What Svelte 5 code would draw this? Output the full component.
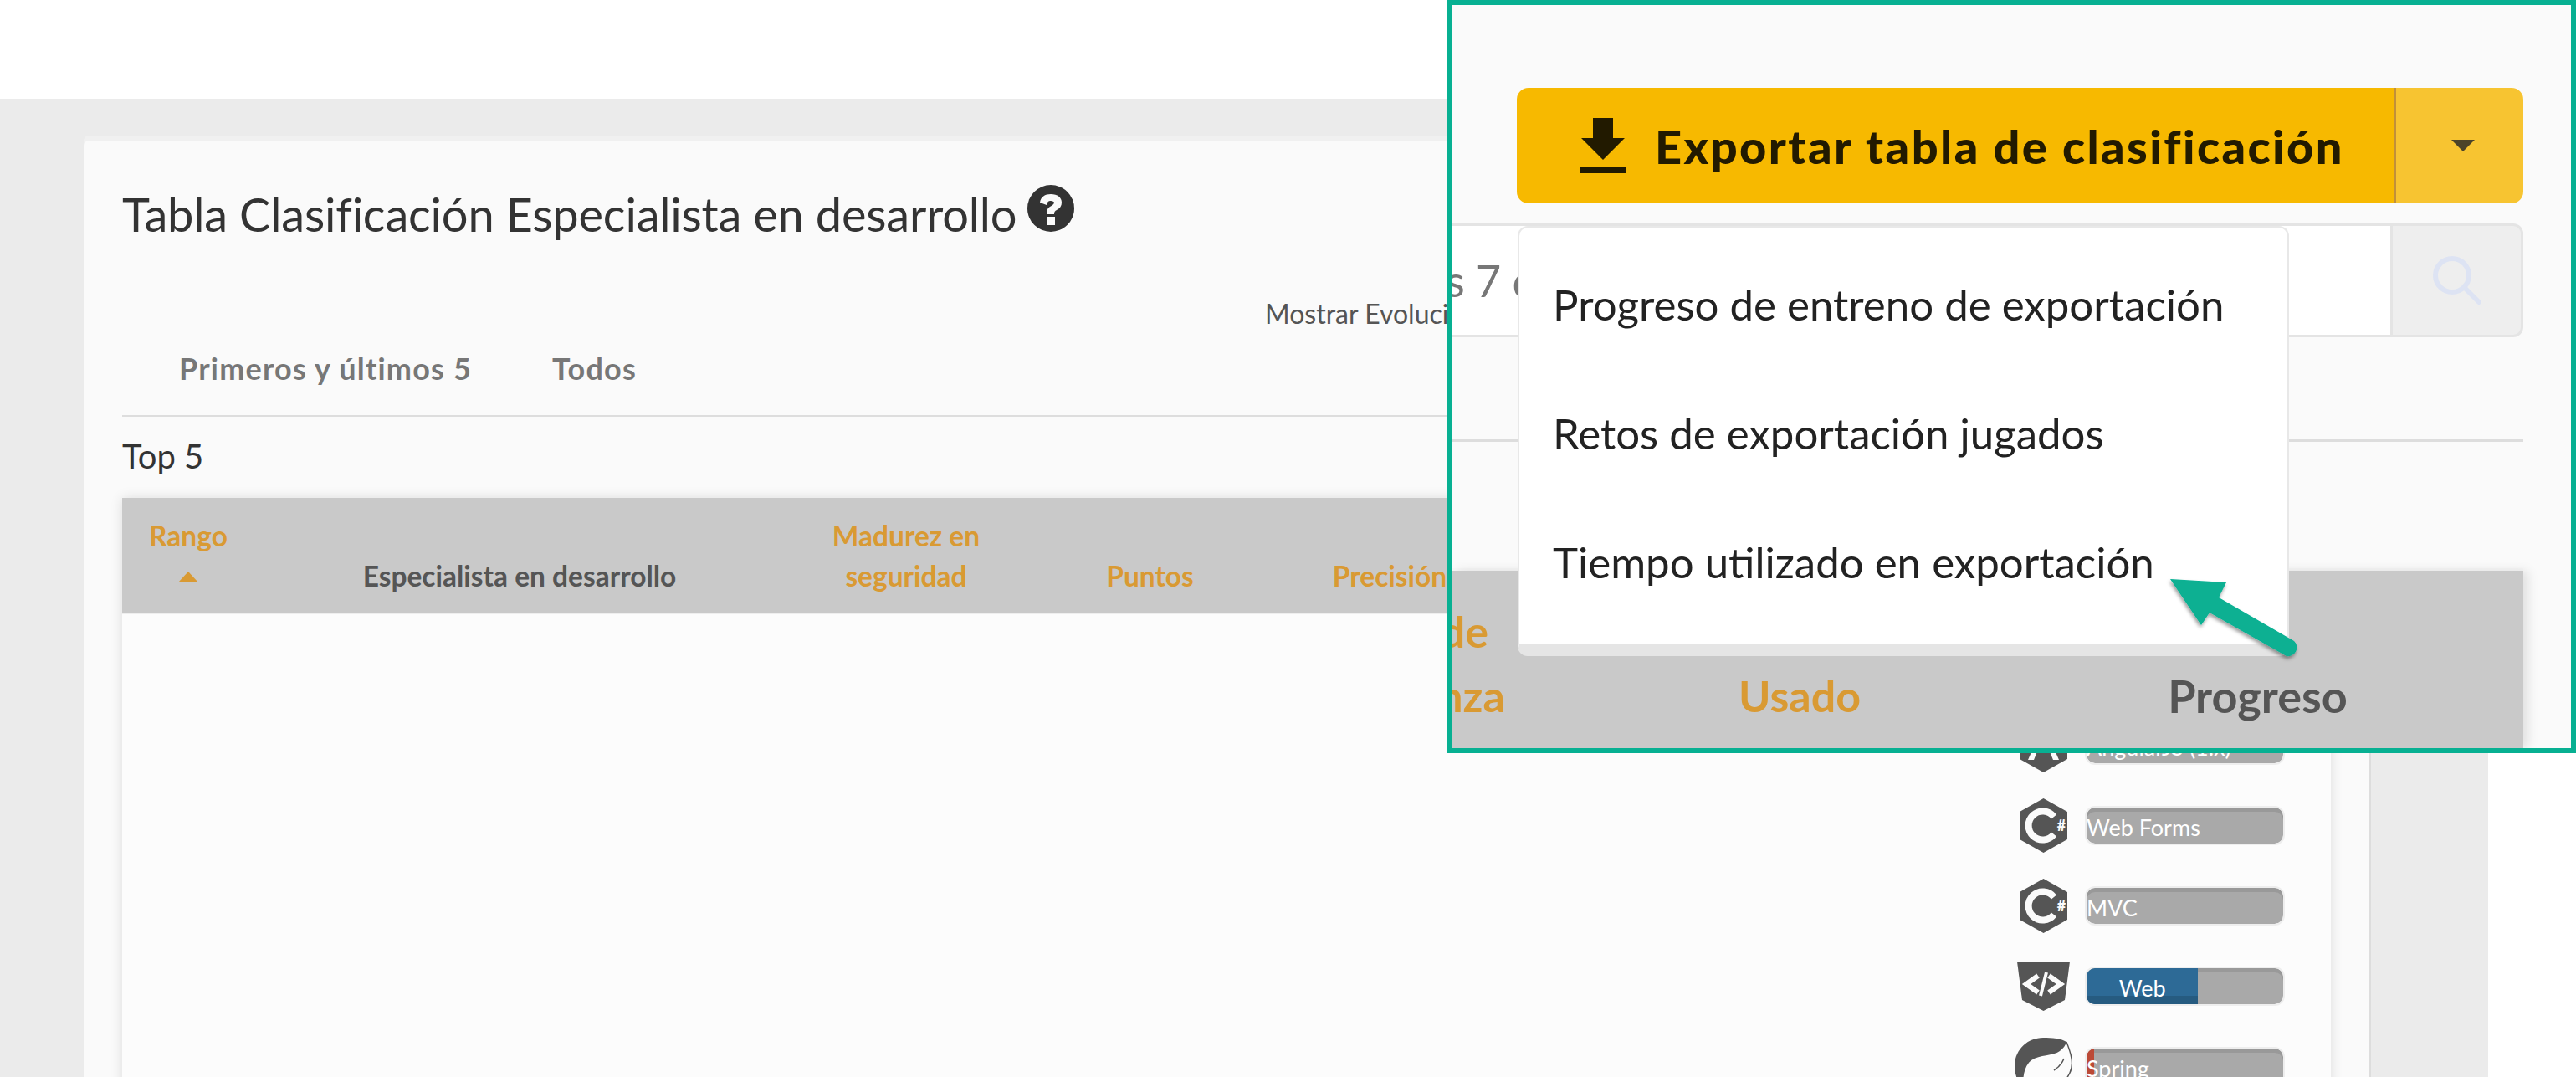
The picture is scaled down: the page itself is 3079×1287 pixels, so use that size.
<script>
    const headers = [
        { lines: ['Rango'], sort: true, active: true },
        { lines: ['Especialista en desarrollo'] },
        { lines: ['Madurez en', 'seguridad'], active: true },
        { lines: ['Puntos'], active: true },
        { lines: ['Precisión'], active: true }
    ];

    const skills = [
        { name: 'AngularJS (1.x)', icon: 'angular', fill: 0 },
        { name: 'Web Forms', icon: 'csharp', fill: 0 },
        { name: 'MVC', icon: 'csharp', fill: 0 },
        { name: 'Web', icon: 'web', fill: 56.8, color: 'blue' },
        { name: 'Spring', icon: 'spring', fill: 3.8, color: 'red' }
    ];

    const menu = [
        'Progreso de entreno de exportación',
        'Retos de exportación jugados',
        'Tiempo utilizado en exportación'
    ];
</script>

<div class="page">
    <div class="shell">
        <div class="card">
            <div class="title-row">
                <h1>Tabla Clasificación Especialista en desarrollo</h1>
                <svg class="help" viewBox="0 0 56 56">
                    <circle cx="28" cy="28" r="28" fill="#333" />
                    <path d="M15 21c1-7 6-10 13-10 8 0 13 4 13 10 0 4-2 7-6 9-2 1-3 2-3 5h-9c0-5 1-7 4-9 3-2 5-3 5-5 0-1-2-2-4-2-3 0-4 1-5 5z" fill="#fafafa" />
                    <rect x="23" y="38" width="10" height="10" fill="#fafafa" />
                </svg>
            </div>

            <div class="evolution">Mostrar Evolución</div>

            <nav class="tabs">
                <span>Primeros y últimos 5</span>
                <span>Todos</span>
            </nav>

            <div class="top-label">Top 5</div>

            <div class="table">
                <div class="thead">
                    {#each headers as h}
                        <div class="th" class:active={h.active}>
                            {#each h.lines as line}<div>{line}</div>{/each}
                            {#if h.sort}<div class="sort"></div>{/if}
                        </div>
                    {/each}
                </div>
                <div class="tbody">
                    <div class="skills">
                        {#each skills as s}
                            <div class="skill">
                                <div class="skill-icon">
                                    {#if s.icon === 'csharp'}
                                        <svg viewBox="0 0 57 65" width="57" height="65">
                                            <path d="M28.5 0 57 16v33L28.500 65 0 49V16z" fill="#555" />
                                            <path d="M41 22a17 17 0 1 0 0 21" fill="none" stroke="#fafafa" stroke-width="8" />
                                            <text x="50" y="39" text-anchor="middle" class="sharp">#</text>
                                        </svg>
                                    {:else if s.icon === 'angular'}
                                        <svg viewBox="0 0 57 65" width="57" height="65">
                                            <path d="M28.5 0 57 16v33L28.500 65 0 49V16z" fill="#555" />
                                            <path d="M28.5 8 10 50h7l4-10h15l4 10h7zM24 33l4.500-11 4.500 11z" fill="#fafafa" />
                                        </svg>
                                    {:else if s.icon === 'web'}
                                        <svg viewBox="0 0 63 59" width="63" height="59">
                                            <path d="M0 0h63l-6 46-25.500 13L6 46z" fill="#555" />
                                            <path d="M25 17 11 27l14 10M38 17l14 10-14 10" fill="none" stroke="#fafafa" stroke-width="6" />
                                            <path d="M35 13 28 41" stroke="#fafafa" stroke-width="4" />
                                        </svg>
                                    {:else}
                                        <svg viewBox="0 0 68 68" width="68" height="68">
                                            <path d="M62 5C56 1 45 0 34 0 15 0 0 15 0 34c0 10 4 20 10 26 0-10 0-25 10-33 10-7 26-5 34-11 4-3 7-7 8-11z" fill="#555" />
                                            <path d="M62 5c6 15 9 27 4 37-4 8-10 16-18 22" fill="none" stroke="#555" stroke-width="1.500" />
                                            <path d="M59 25c-3 7-7 11-12 14" fill="none" stroke="#555" stroke-width="1.500" />
                                        </svg>
                                    {/if}
                                </div>
                                <div class="bar">
                                    {#if s.fill}
                                        <div class="fill {s.color}" style="width: {s.fill}%">
                                            {#if s.color === 'blue'}<span>{s.name}</span>{/if}
                                        </div>
                                    {/if}
                                    {#if s.color !== 'blue'}<span class="bar-label">{s.name}</span>{/if}
                                </div>
                            </div>
                        {/each}
                    </div>
                </div>
            </div>
        </div>
    </div>

    <!-- magnified callout over the page -->
    <div class="callout">
        <div class="export">
            <div class="export-main">
                <svg class="download" viewBox="0 0 54 66">
                    <path d="M15 0h24v24h14L27 50 1 24h14z" fill="#221a00" />
                    <rect x="0" y="58" width="54" height="8" fill="#221a00" />
                </svg>
                <span>Exportar tabla de clasificación</span>
            </div>
            <div class="export-toggle"><i></i></div>
        </div>

        <div class="search">
            <div class="search-input"><span>Últimos 7 días</span></div>
            <div class="search-btn">
                <svg viewBox="0 0 58 58" width="58" height="58">
                    <circle cx="23" cy="23" r="20" fill="none" stroke="#dde3f3" stroke-width="6" />
                    <path d="M38 38 55 55" stroke="#dde3f3" stroke-width="6" stroke-linecap="round" />
                </svg>
            </div>
        </div>

        <div class="callout-rule"></div>

        <div class="callout-head">
            <div class="big-th conf"><div>Nivel de</div><div>Confianza</div></div>
            <div class="big-th used">Usado</div>
            <div class="big-th progress">Progreso</div>
        </div>

        <ul class="menu">
            {#each menu as item}<li>{item}</li>{/each}
        </ul>

        <svg class="pointer" viewBox="0 0 170 110" width="170" height="110">
            <defs>
                <filter id="arrow-shadow" x="-20%" y="-20%" width="140%" height="140%">
                    <feDropShadow dx="-1" dy="3" stdDeviation="2" flood-color="#000" flood-opacity="0.4" />
                </filter>
            </defs>
            <path filter="url(#arrow-shadow)" d="M4 4 71 8 62 26 152 78A10.500 10.500 0 0 1 143 96L51 44 41 59z" fill="#07b092" />
        </svg>
    </div>
</div>

<style>
    :global(body) {
        margin: 0;
        background: #fff;
    }

    .page {
        position: relative;
        width: 3079px;
        height: 1287px;
        overflow: hidden;
        font-family: Lato, "Noto Sans", sans-serif;
        background: #fff;
        padding-top: 118px;
        box-sizing: border-box;
    }

    .shell {
        box-sizing: border-box;
        width: 2974px;
        height: 1169px;
        padding: 50px 0 0 100px;
        background: #ebebeb;
    }

    .card {
        width: 2734px;
        height: 1119px;
        box-sizing: border-box;
        padding: 53px 46px 0;
        background: #fafafa;
        border-right: 2px solid #ddd;
        border-radius: 6px 6px 0 0;
        box-shadow: 0 -6px 0 #f0f0f0;
    }

    .title-row {
        display: flex;
        align-items: flex-start;
        gap: 13px;
        height: 70px;
    }

    h1 {
        margin: 0;
        font-size: 56px;
        font-weight: 400;
        color: #333;
        letter-spacing: -0.2px;
        line-height: 70px;
    }

    .help {
        width: 56px;
        height: 56px;
    }

    .evolution {
        margin: 64px 0 0 1366px;
        font-size: 32px;
        line-height: 40px;
        color: #555;
        white-space: nowrap;
    }

    .tabs {
        display: flex;
        gap: 96px;
        box-sizing: border-box;
        height: 103px;
        padding: 15px 68px 0;
        border-bottom: 2px solid #ddd;
        font-size: 36px;
        font-weight: 700;
        letter-spacing: 1.2px;
        color: #777;
        line-height: 60px;
    }

    .top-label {
        margin-top: 22px;
        font-size: 40px;
        color: #333;
        line-height: 50px;
    }

    .table {
        margin-top: 25px;
        box-shadow: 0 0 14px rgba(0, 0, 0, 0.12);
        background: #fcfcfc;
        height: 800px;
    }

    .thead {
        display: grid;
        grid-template-columns: 158px 634px 290px 293px 280px;
        align-items: end;
        height: 117px;
        background: #c9c9c9;
        border-bottom: 2px solid #eee;
        padding-bottom: 20px;
    }

    .th {
        font-size: 33.5px;
        font-weight: 700;
        color: #555;
        line-height: 48px;
        text-align: center;
        white-space: nowrap;
    }

    .th.active {
        color: #d99a33;
    }

    .sort {
        width: 0;
        height: 0;
        margin: 19px auto 16px;
        border: 12px solid transparent;
        border-top: 0;
        border-bottom: 13px solid #d99a33;
    }

    .tbody {
        display: flex;
        justify-content: flex-end;
    }

    .skills {
        display: flex;
        flex-direction: column;
        margin-right: 55px;
        margin-top: 108px;
    }

    .skill {
        display: flex;
        align-items: center;
        height: 96px;
    }

    .skill-icon {
        display: flex;
        justify-content: center;
        align-items: center;
        width: 68px;
        margin-right: 16px;
    }

    .sharp {
        font-family: Lato, sans-serif;
        font-size: 18px;
        font-weight: 900;
        fill: #fafafa;
    }

    .bar {
        position: relative;
        display: flex;
        box-sizing: border-box;
        width: 239px;
        height: 47px;
        border: 2px solid #eee;
        border-radius: 12px;
        background: #a9a9a9;
        box-shadow: inset 0 5px 0 #999;
        overflow: hidden;
        background-clip: padding-box;
        color: #fff;
        font-size: 27px;
        line-height: 47px;
        white-space: nowrap;
    }

    .fill {
        height: 100%;
        flex-shrink: 0;
    }

    .fill.blue {
        background: #2d6a96;
        box-shadow: inset 0 -10px 0 #265b80;
        text-align: center;
    }

    .fill.red {
        background: #bc4a37;
        position: absolute;
        left: 0;
        top: 0;
    }

    .bar-label {
        position: relative;
    }

    .callout {
        position: absolute;
        left: 1730px;
        top: 0;
        width: 1349px;
        height: 900px;
        box-sizing: border-box;
        border: 6px solid #07b092;
        background: #fafafa;
        overflow: hidden;
    }

    .export {
        display: flex;
        height: 138px;
        margin: 99px 57px 0 77px;
        border-radius: 14px;
        overflow: hidden;
    }

    .export-main {
        display: flex;
        align-items: center;
        flex: 1;
        padding-left: 76px;
        background: #f7b900;
        border-right: 3px solid #c1903a;
        font-size: 56px;
        font-weight: 900;
        letter-spacing: 2.4px;
        color: #221a00;
        white-space: nowrap;
    }

    .download {
        width: 54px;
        height: 66px;
        margin-right: 35px;
    }

    .export-toggle {
        display: flex;
        align-items: center;
        justify-content: center;
        box-sizing: border-box;
        width: 152px;
        padding-left: 7px;
        background: #f7c431;
    }

    .export-toggle i {
        border: 14.500px solid transparent;
        border-bottom: 0;
        border-top: 14px solid #4b4329;
    }

    .search {
        display: flex;
        height: 136px;
        margin: 24px 57px 0 0;
    }

    .search-input {
        flex: 1;
        box-sizing: border-box;
        background: #fff;
        border: solid #e4e4e4;
        border-width: 3px 0;
        overflow: hidden;
        display: flex;
        align-items: center;
    }

    .search-input span {
        margin-left: -162px;
        font-size: 52px;
        color: #777;
        white-space: nowrap;
    }

    .search-btn {
        display: flex;
        align-items: center;
        justify-content: center;
        box-sizing: border-box;
        width: 159px;
        background: #eee;
        border: 3px solid #e4e4e4;
        border-radius: 0 12px 12px 0;
    }

    .callout-rule {
        height: 3px;
        margin: 122px 57px 0 0;
        background: #ddd;
    }

    .callout-head {
        display: flex;
        align-items: flex-end;
        box-sizing: border-box;
        height: 212px;
        margin: 154px 57px 0 0;
        padding-bottom: 24px;
        background: #c9c9c9;
        box-shadow: 6px 0 12px rgba(0, 0, 0, 0.1), 0 -3px 0 #f7f7f7;
    }

    .big-th {
        flex-shrink: 0;
        font-size: 52px;
        font-weight: 700;
        color: #d99a33;
        line-height: 77px;
        white-space: nowrap;
    }

    .conf {
        width: 240px;
        margin-left: -172px;
        text-align: center;
    }

    .used {
        margin-left: 274px;
    }

    .progress {
        color: #555;
        font-size: 54px;
        margin-left: 367px;
    }

    .menu {
        position: absolute;
        left: 78px;
        top: 264px;
        width: 922px;
        height: 514px;
        box-sizing: border-box;
        margin: 0;
        padding: 15px 40px 0;
        list-style: none;
        background: #fff;
        border: 2px solid #e8e8e8;
        border-bottom: 15px solid #e5e5e5;
        border-radius: 12px;
    }

    .menu li {
        height: 154px;
        line-height: 154px;
        font-size: 51px;
        color: #222;
        white-space: nowrap;
    }

    .pointer {
        position: absolute;
        left: 854px;
        top: 682px;
        overflow: visible;
    }
</style>
